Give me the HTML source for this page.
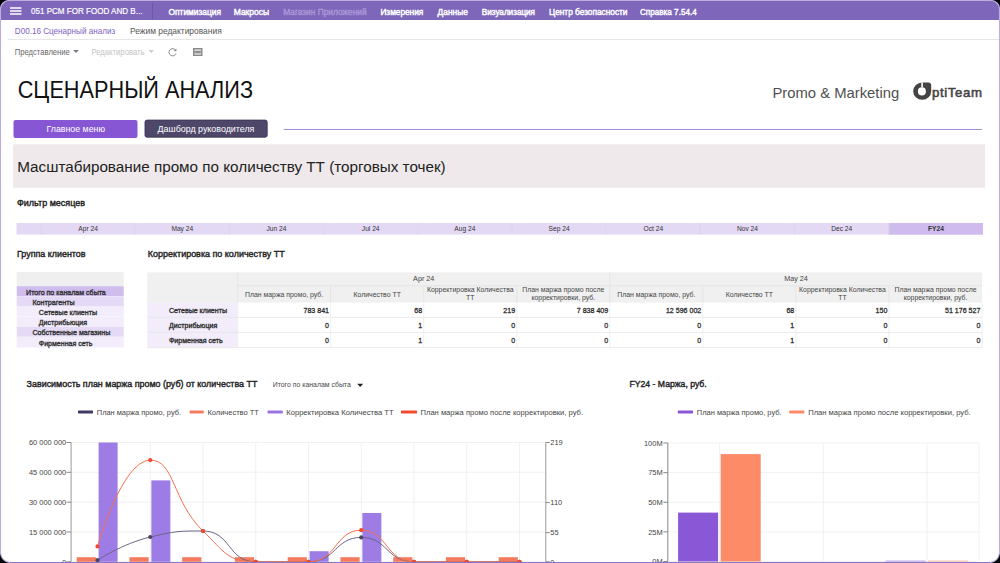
<!DOCTYPE html>
<html><head><meta charset="utf-8"><title>Сценарный анализ</title>
<style>
html,body{margin:0;padding:0;background:#000;width:1000px;height:563px;overflow:hidden}
svg{display:block}
text{font-family:"Liberation Sans", sans-serif;}
</style></head><body>
<svg width="1000" height="563" viewBox="0 0 1000 563">
<rect x="0" y="0" width="1000" height="563" fill="#000" rx="0" />
<clipPath id="fr"><path d="M9 0.5 H991 A8.5 8.5 0 0 1 999.5 9 V552.5 A10 10 0 0 1 989.5 562.5 H10.5 A10 10 0 0 1 0.5 552.5 V9 A8.5 8.5 0 0 1 9 0.5 Z"/></clipPath>
<g clip-path="url(#fr)">
<rect x="0" y="0" width="1000" height="563" fill="#fff" rx="0" />
<rect x="0" y="0" width="1000" height="20" fill="#7e67bb" rx="0" />
<rect x="10" y="7.25" width="11.5" height="1.5" fill="#fff" rx="0" />
<rect x="10" y="10.25" width="11.5" height="1.5" fill="#fff" rx="0" />
<rect x="10" y="13.25" width="11.5" height="1.5" fill="#fff" rx="0" />
<text x="31" y="14.3" font-size="9.2" fill="#fff" text-anchor="start" textLength="111.4" lengthAdjust="spacingAndGlyphs" stroke="#fff" stroke-width="0.2">051 PCM FOR FOOD AND B...</text>
<line x1="152.5" y1="3" x2="152.5" y2="19" stroke="#6c57a8" stroke-width="1" />
<text x="168.6" y="14.6" font-size="9.2" fill="#fff" text-anchor="start" textLength="52.4" lengthAdjust="spacingAndGlyphs" stroke="#fff" stroke-width="0.45">Оптимизация</text>
<text x="233.7" y="14.6" font-size="9.2" fill="#fff" text-anchor="start" textLength="35.5" lengthAdjust="spacingAndGlyphs" stroke="#fff" stroke-width="0.45">Макросы</text>
<text x="283.2" y="14.6" font-size="9.2" fill="#a996d6" text-anchor="start" textLength="83.5" lengthAdjust="spacingAndGlyphs" stroke="#a996d6" stroke-width="0.45">Магазин Приложений</text>
<text x="380.4" y="14.6" font-size="9.2" fill="#fff" text-anchor="start" textLength="42.9" lengthAdjust="spacingAndGlyphs" stroke="#fff" stroke-width="0.45">Измерения</text>
<text x="437.6" y="14.6" font-size="9.2" fill="#fff" text-anchor="start" textLength="30.2" lengthAdjust="spacingAndGlyphs" stroke="#fff" stroke-width="0.45">Данные</text>
<text x="481.8" y="14.6" font-size="9.2" fill="#fff" text-anchor="start" textLength="53.2" lengthAdjust="spacingAndGlyphs" stroke="#fff" stroke-width="0.45">Визуализация</text>
<text x="549" y="14.6" font-size="9.2" fill="#fff" text-anchor="start" textLength="78.5" lengthAdjust="spacingAndGlyphs" stroke="#fff" stroke-width="0.45">Центр безопасности</text>
<text x="640" y="14.6" font-size="9.2" fill="#fff" text-anchor="start" textLength="56.7" lengthAdjust="spacingAndGlyphs" stroke="#fff" stroke-width="0.45">Справка 7.54.4</text>
<text x="14.8" y="34" font-size="9.2" fill="#7f62c3" text-anchor="start" textLength="100.4" lengthAdjust="spacingAndGlyphs" >D00.16 Сценарный анализ</text>
<text x="130" y="34" font-size="9.2" fill="#555" text-anchor="start" textLength="91.7" lengthAdjust="spacingAndGlyphs" >Режим редактирования</text>
<line x1="7.5" y1="39.5" x2="999" y2="39.5" stroke="#e6e6e6" stroke-width="1" />
<text x="14.8" y="54.8" font-size="8.2" fill="#666" text-anchor="start" textLength="55" lengthAdjust="spacingAndGlyphs" >Представление</text>
<path d="M73.2 50 L78.8 50 L76 52.9 Z" fill="#777"/>
<text x="91.4" y="54.8" font-size="8.2" fill="#c4c4c4" text-anchor="start" textLength="53.2" lengthAdjust="spacingAndGlyphs" >Редактировать</text>
<path d="M148.4 50 L154 50 L151.2 52.9 Z" fill="#d0d0d0"/>
<path d="M175.6 50.3 A3.6 3.6 0 1 0 176 53.4" fill="none" stroke="#8a8a8a" stroke-width="1"/>
<path d="M176.4 48.4 L176.4 51.2 L173.6 51.2 Z" fill="#8a8a8a"/>
<rect x="193.5" y="48.5" width="8.5" height="7" fill="#9a9a9a" rx="0" stroke="#888" stroke-width="1"/>
<rect x="194.5" y="49.6" width="6.5" height="1.1" fill="#f4f4f4" rx="0" />
<rect x="194.5" y="53.4" width="6.5" height="1.1" fill="#f4f4f4" rx="0" />
<rect x="195.6" y="51" width="4.4" height="2.1" fill="#8f8f8f" rx="0" />
<text x="17.7" y="98" font-size="23.8" fill="#111" text-anchor="start" textLength="235.3" lengthAdjust="spacingAndGlyphs" >СЦЕНАРНЫЙ АНАЛИЗ</text>
<text x="772.5" y="97.6" font-size="15.0" fill="#505050" text-anchor="start" textLength="126.7" lengthAdjust="spacingAndGlyphs" >Promo &amp; Marketing</text>
<path d="M922.2 82.6 L928.3 82.6 Q931.2 82.6 931.2 85.5 L931.2 91.2 A9 8.6 0 1 1 922.2 82.6 Z M921.9 87.3 A4 4.1 0 1 0 925.9 91.4 A4 4.1 0 0 0 921.9 87.3 Z" fill="#444" fill-rule="evenodd"/>
<rect x="921.3" y="82.4" width="1.6" height="5" fill="#fff" rx="0" />
<text x="932" y="97" font-size="13.2" fill="#444" stroke="#444" stroke-width="0.55" textLength="50" lengthAdjust="spacing">ptiTeam</text>
<rect x="13.5" y="120" width="124" height="18" fill="#8756d5" rx="2" />
<text x="46.5" y="132.3" font-size="9.4" fill="#fff" text-anchor="start" textLength="58.5" lengthAdjust="spacingAndGlyphs" >Главное меню</text>
<rect x="145" y="120.1" width="122.2" height="17.1" fill="#4e4769" rx="2" stroke="#3f3859" stroke-width="0.9"/>
<text x="157.6" y="132.1" font-size="9.4" fill="#fff" text-anchor="start" textLength="96.8" lengthAdjust="spacingAndGlyphs" >Дашборд руководителя</text>
<line x1="283.6" y1="129.5" x2="982" y2="129.5" stroke="#a88ce0" stroke-width="1.2" />
<rect x="13" y="144.3" width="972" height="43.5" fill="#efe9eb" rx="0" />
<text x="17.2" y="172.4" font-size="15.2" fill="#222" text-anchor="start" textLength="428.5" lengthAdjust="spacingAndGlyphs" >Масштабирование промо по количеству ТТ (торговых точек)</text>
<text x="17" y="206.1" font-size="9.8" fill="#222" text-anchor="start" textLength="68" lengthAdjust="spacingAndGlyphs" stroke="#222" stroke-width="0.42">Фильтр месяцев</text>
<rect x="16.5" y="223" width="966.5" height="11.6" fill="#e3d9f5" rx="0" />
<line x1="41.0" y1="223" x2="41.0" y2="234.6" stroke="#ddd5ea" stroke-width="0.9" />
<text x="88.1" y="231.1" font-size="7.0" fill="#333" text-anchor="middle" textLength="19.59" lengthAdjust="spacingAndGlyphs" >Apr 24</text>
<line x1="135.2" y1="223" x2="135.2" y2="234.6" stroke="#ddd5ea" stroke-width="0.9" />
<text x="182.29999999999998" y="231.1" font-size="7.0" fill="#333" text-anchor="middle" textLength="21.81" lengthAdjust="spacingAndGlyphs" >May 24</text>
<line x1="229.4" y1="223" x2="229.4" y2="234.6" stroke="#ddd5ea" stroke-width="0.9" />
<text x="276.5" y="231.1" font-size="7.0" fill="#333" text-anchor="middle" textLength="19.97" lengthAdjust="spacingAndGlyphs" >Jun 24</text>
<line x1="323.6" y1="223" x2="323.6" y2="234.6" stroke="#ddd5ea" stroke-width="0.9" />
<text x="370.70000000000005" y="231.1" font-size="7.0" fill="#333" text-anchor="middle" textLength="17.75" lengthAdjust="spacingAndGlyphs" >Jul 24</text>
<line x1="417.8" y1="223" x2="417.8" y2="234.6" stroke="#ddd5ea" stroke-width="0.9" />
<text x="464.90000000000003" y="231.1" font-size="7.0" fill="#333" text-anchor="middle" textLength="21.08" lengthAdjust="spacingAndGlyphs" >Aug 24</text>
<line x1="512.0" y1="223" x2="512.0" y2="234.6" stroke="#ddd5ea" stroke-width="0.9" />
<text x="559.1" y="231.1" font-size="7.0" fill="#333" text-anchor="middle" textLength="21.08" lengthAdjust="spacingAndGlyphs" >Sep 24</text>
<line x1="606.2" y1="223" x2="606.2" y2="234.6" stroke="#ddd5ea" stroke-width="0.9" />
<text x="653.3000000000001" y="231.1" font-size="7.0" fill="#333" text-anchor="middle" textLength="19.59" lengthAdjust="spacingAndGlyphs" >Oct 24</text>
<line x1="700.4" y1="223" x2="700.4" y2="234.6" stroke="#ddd5ea" stroke-width="0.9" />
<text x="747.5" y="231.1" font-size="7.0" fill="#333" text-anchor="middle" textLength="21.07" lengthAdjust="spacingAndGlyphs" >Nov 24</text>
<line x1="794.6" y1="223" x2="794.6" y2="234.6" stroke="#ddd5ea" stroke-width="0.9" />
<text x="841.7" y="231.1" font-size="7.0" fill="#333" text-anchor="middle" textLength="21.07" lengthAdjust="spacingAndGlyphs" >Dec 24</text>
<rect x="888.8000000000001" y="223" width="94.2" height="11.6" fill="#cfbbee" rx="0" />
<line x1="888.8000000000001" y1="223" x2="888.8000000000001" y2="234.6" stroke="#ddd5ea" stroke-width="0.9" />
<text x="935.9000000000001" y="231.1" font-size="7.0" fill="#333" font-weight="bold" text-anchor="middle" textLength="15.89" lengthAdjust="spacingAndGlyphs" >FY24</text>
<text x="17" y="256.5" font-size="9.8" fill="#222" text-anchor="start" textLength="68.5" lengthAdjust="spacingAndGlyphs" stroke="#222" stroke-width="0.42">Группа клиентов</text>
<rect x="16.7" y="272" width="107" height="14.2" fill="#efefef" rx="0" />
<rect x="16.7" y="286.2" width="107" height="10.5" fill="#cfbdee" rx="0" />
<line x1="16.7" y1="296.7" x2="123.7" y2="296.7" stroke="#fff" stroke-width="0.6" />
<text x="26.1" y="294.55" font-size="7.8" fill="#333" text-anchor="start" textLength="79.7" lengthAdjust="spacingAndGlyphs" stroke="#333" stroke-width="0.38">Итого по каналам сбыта</text>
<rect x="16.7" y="296.7" width="107" height="10.100000000000023" fill="#e4daf6" rx="0" />
<line x1="16.7" y1="306.8" x2="123.7" y2="306.8" stroke="#fff" stroke-width="0.6" />
<text x="32.4" y="304.85" font-size="7.8" fill="#333" text-anchor="start" textLength="42.2" lengthAdjust="spacingAndGlyphs" stroke="#333" stroke-width="0.38">Контрагенты</text>
<rect x="16.7" y="306.8" width="107" height="9.699999999999989" fill="#f2ecfb" rx="0" />
<line x1="16.7" y1="316.5" x2="123.7" y2="316.5" stroke="#fff" stroke-width="0.6" />
<text x="38.8" y="314.75" font-size="7.8" fill="#333" text-anchor="start" textLength="58.3" lengthAdjust="spacingAndGlyphs" stroke="#333" stroke-width="0.38">Сетевые клиенты</text>
<rect x="16.7" y="316.5" width="107" height="10.199999999999989" fill="#f2ecfb" rx="0" />
<line x1="16.7" y1="326.7" x2="123.7" y2="326.7" stroke="#fff" stroke-width="0.6" />
<text x="38.8" y="324.70000000000005" font-size="7.8" fill="#333" text-anchor="start" textLength="48.2" lengthAdjust="spacingAndGlyphs" stroke="#333" stroke-width="0.38">Дистрибьюция</text>
<rect x="16.7" y="326.7" width="107" height="10.300000000000011" fill="#e4daf6" rx="0" />
<line x1="16.7" y1="337" x2="123.7" y2="337" stroke="#fff" stroke-width="0.6" />
<text x="32.4" y="334.95000000000005" font-size="7.8" fill="#333" text-anchor="start" textLength="78.0" lengthAdjust="spacingAndGlyphs" stroke="#333" stroke-width="0.38">Собственные магазины</text>
<rect x="16.7" y="337" width="107" height="10.800000000000011" fill="#f2ecfb" rx="0" />
<line x1="16.7" y1="347.8" x2="123.7" y2="347.8" stroke="#fff" stroke-width="0.6" />
<text x="38.8" y="345.5" font-size="7.8" fill="#333" text-anchor="start" textLength="53.5" lengthAdjust="spacingAndGlyphs" stroke="#333" stroke-width="0.38">Фирменная сеть</text>
<text x="147.8" y="256.5" font-size="9.8" fill="#222" text-anchor="start" textLength="136.9" lengthAdjust="spacingAndGlyphs" stroke="#222" stroke-width="0.42">Корректировка по количеству ТТ</text>
<rect x="147.3" y="272.4" width="834.7" height="30.2" fill="#f0f0f0" rx="0" />
<rect x="147.3" y="302.6" width="90.29999999999998" height="45" fill="#f2ecfb" rx="0" />
<line x1="237.6" y1="285.8" x2="982" y2="285.8" stroke="#e2e2e2" stroke-width="0.8" />
<line x1="237.6" y1="272.4" x2="237.6" y2="302.6" stroke="#e2e2e2" stroke-width="0.8" />
<line x1="609.8" y1="272.4" x2="609.8" y2="302.6" stroke="#e2e2e2" stroke-width="0.8" />
<line x1="330.65" y1="285.8" x2="330.65" y2="302.6" stroke="#e2e2e2" stroke-width="0.8" />
<line x1="423.7" y1="285.8" x2="423.7" y2="302.6" stroke="#e2e2e2" stroke-width="0.8" />
<line x1="516.75" y1="285.8" x2="516.75" y2="302.6" stroke="#e2e2e2" stroke-width="0.8" />
<line x1="702.85" y1="285.8" x2="702.85" y2="302.6" stroke="#e2e2e2" stroke-width="0.8" />
<line x1="795.9" y1="285.8" x2="795.9" y2="302.6" stroke="#e2e2e2" stroke-width="0.8" />
<line x1="888.95" y1="285.8" x2="888.95" y2="302.6" stroke="#e2e2e2" stroke-width="0.8" />
<line x1="330.65" y1="302.6" x2="330.65" y2="347.8" stroke="#ececec" stroke-width="0.8" />
<line x1="423.7" y1="302.6" x2="423.7" y2="347.8" stroke="#ececec" stroke-width="0.8" />
<line x1="516.75" y1="302.6" x2="516.75" y2="347.8" stroke="#ececec" stroke-width="0.8" />
<line x1="609.8" y1="302.6" x2="609.8" y2="347.8" stroke="#ececec" stroke-width="0.8" />
<line x1="702.85" y1="302.6" x2="702.85" y2="347.8" stroke="#ececec" stroke-width="0.8" />
<line x1="795.9" y1="302.6" x2="795.9" y2="347.8" stroke="#ececec" stroke-width="0.8" />
<line x1="888.95" y1="302.6" x2="888.95" y2="347.8" stroke="#ececec" stroke-width="0.8" />
<line x1="982.0" y1="302.6" x2="982.0" y2="347.8" stroke="#ececec" stroke-width="0.8" />
<line x1="237.6" y1="302.6" x2="237.6" y2="347.8" stroke="#ececec" stroke-width="0.8" />
<line x1="147.3" y1="317.4" x2="982" y2="317.4" stroke="#e6e6e6" stroke-width="0.8" />
<line x1="147.3" y1="332.4" x2="982" y2="332.4" stroke="#e6e6e6" stroke-width="0.8" />
<line x1="147.3" y1="347.6" x2="982" y2="347.6" stroke="#e6e6e6" stroke-width="0.8" />
<text x="423.7" y="281.2" font-size="7.2" fill="#444" text-anchor="middle" >Apr 24</text>
<text x="796" y="281.2" font-size="7.2" fill="#444" text-anchor="middle" >May 24</text>
<text x="284.125" y="296.5" font-size="6.9" fill="#444" text-anchor="middle" >План маржа промо, руб.</text>
<text x="377.17499999999995" y="296.5" font-size="6.9" fill="#444" text-anchor="middle" >Количество ТТ</text>
<text x="470.225" y="292.4" font-size="6.9" fill="#444" text-anchor="middle" >Корректировка Количества</text>
<text x="470.225" y="300.2" font-size="6.9" fill="#444" text-anchor="middle" >ТТ</text>
<text x="563.275" y="292.4" font-size="6.9" fill="#444" text-anchor="middle" >План маржа промо после</text>
<text x="563.275" y="300.2" font-size="6.9" fill="#444" text-anchor="middle" >корректировки, руб.</text>
<text x="656.325" y="296.5" font-size="6.9" fill="#444" text-anchor="middle" >План маржа промо, руб.</text>
<text x="749.375" y="296.5" font-size="6.9" fill="#444" text-anchor="middle" >Количество ТТ</text>
<text x="842.425" y="292.4" font-size="6.9" fill="#444" text-anchor="middle" >Корректировка Количества</text>
<text x="842.425" y="300.2" font-size="6.9" fill="#444" text-anchor="middle" >ТТ</text>
<text x="935.475" y="292.4" font-size="6.9" fill="#444" text-anchor="middle" >План маржа промо после</text>
<text x="935.475" y="300.2" font-size="6.9" fill="#444" text-anchor="middle" >корректировки, руб.</text>
<text x="169" y="313" font-size="7.6" fill="#333" text-anchor="start" textLength="58.01" lengthAdjust="spacingAndGlyphs" stroke="#333" stroke-width="0.38">Сетевые клиенты</text>
<text x="169" y="328" font-size="7.6" fill="#333" text-anchor="start" textLength="48.24" lengthAdjust="spacingAndGlyphs" stroke="#333" stroke-width="0.38">Дистрибьюция</text>
<text x="169" y="343" font-size="7.6" fill="#333" text-anchor="start" textLength="53.72" lengthAdjust="spacingAndGlyphs" stroke="#333" stroke-width="0.38">Фирменная сеть</text>
<text x="329.04999999999995" y="313" font-size="7.6" fill="#2a2a2a" text-anchor="end" textLength="25.55" lengthAdjust="spacingAndGlyphs" stroke="#2a2a2a" stroke-width="0.28">783 841</text>
<text x="422.09999999999997" y="313" font-size="7.6" fill="#2a2a2a" text-anchor="end" textLength="7.86" lengthAdjust="spacingAndGlyphs" stroke="#2a2a2a" stroke-width="0.28">68</text>
<text x="515.15" y="313" font-size="7.6" fill="#2a2a2a" text-anchor="end" textLength="11.79" lengthAdjust="spacingAndGlyphs" stroke="#2a2a2a" stroke-width="0.28">219</text>
<text x="608.1999999999999" y="313" font-size="7.6" fill="#2a2a2a" text-anchor="end" textLength="31.44" lengthAdjust="spacingAndGlyphs" stroke="#2a2a2a" stroke-width="0.28">7 838 409</text>
<text x="701.25" y="313" font-size="7.6" fill="#2a2a2a" text-anchor="end" textLength="35.37" lengthAdjust="spacingAndGlyphs" stroke="#2a2a2a" stroke-width="0.28">12 596 002</text>
<text x="794.3" y="313" font-size="7.6" fill="#2a2a2a" text-anchor="end" textLength="7.86" lengthAdjust="spacingAndGlyphs" stroke="#2a2a2a" stroke-width="0.28">68</text>
<text x="887.35" y="313" font-size="7.6" fill="#2a2a2a" text-anchor="end" textLength="11.79" lengthAdjust="spacingAndGlyphs" stroke="#2a2a2a" stroke-width="0.28">150</text>
<text x="980.4" y="313" font-size="7.6" fill="#2a2a2a" text-anchor="end" textLength="35.37" lengthAdjust="spacingAndGlyphs" stroke="#2a2a2a" stroke-width="0.28">51 176 527</text>
<text x="329.04999999999995" y="328" font-size="7.6" fill="#2a2a2a" text-anchor="end" textLength="3.93" lengthAdjust="spacingAndGlyphs" stroke="#2a2a2a" stroke-width="0.28">0</text>
<text x="422.09999999999997" y="328" font-size="7.6" fill="#2a2a2a" text-anchor="end" textLength="3.93" lengthAdjust="spacingAndGlyphs" stroke="#2a2a2a" stroke-width="0.28">1</text>
<text x="515.15" y="328" font-size="7.6" fill="#2a2a2a" text-anchor="end" textLength="3.93" lengthAdjust="spacingAndGlyphs" stroke="#2a2a2a" stroke-width="0.28">0</text>
<text x="608.1999999999999" y="328" font-size="7.6" fill="#2a2a2a" text-anchor="end" textLength="3.93" lengthAdjust="spacingAndGlyphs" stroke="#2a2a2a" stroke-width="0.28">0</text>
<text x="701.25" y="328" font-size="7.6" fill="#2a2a2a" text-anchor="end" textLength="3.93" lengthAdjust="spacingAndGlyphs" stroke="#2a2a2a" stroke-width="0.28">0</text>
<text x="794.3" y="328" font-size="7.6" fill="#2a2a2a" text-anchor="end" textLength="3.93" lengthAdjust="spacingAndGlyphs" stroke="#2a2a2a" stroke-width="0.28">1</text>
<text x="887.35" y="328" font-size="7.6" fill="#2a2a2a" text-anchor="end" textLength="3.93" lengthAdjust="spacingAndGlyphs" stroke="#2a2a2a" stroke-width="0.28">0</text>
<text x="980.4" y="328" font-size="7.6" fill="#2a2a2a" text-anchor="end" textLength="3.93" lengthAdjust="spacingAndGlyphs" stroke="#2a2a2a" stroke-width="0.28">0</text>
<text x="329.04999999999995" y="343" font-size="7.6" fill="#2a2a2a" text-anchor="end" textLength="3.93" lengthAdjust="spacingAndGlyphs" stroke="#2a2a2a" stroke-width="0.28">0</text>
<text x="422.09999999999997" y="343" font-size="7.6" fill="#2a2a2a" text-anchor="end" textLength="3.93" lengthAdjust="spacingAndGlyphs" stroke="#2a2a2a" stroke-width="0.28">1</text>
<text x="515.15" y="343" font-size="7.6" fill="#2a2a2a" text-anchor="end" textLength="3.93" lengthAdjust="spacingAndGlyphs" stroke="#2a2a2a" stroke-width="0.28">0</text>
<text x="608.1999999999999" y="343" font-size="7.6" fill="#2a2a2a" text-anchor="end" textLength="3.93" lengthAdjust="spacingAndGlyphs" stroke="#2a2a2a" stroke-width="0.28">0</text>
<text x="701.25" y="343" font-size="7.6" fill="#2a2a2a" text-anchor="end" textLength="3.93" lengthAdjust="spacingAndGlyphs" stroke="#2a2a2a" stroke-width="0.28">0</text>
<text x="794.3" y="343" font-size="7.6" fill="#2a2a2a" text-anchor="end" textLength="3.93" lengthAdjust="spacingAndGlyphs" stroke="#2a2a2a" stroke-width="0.28">1</text>
<text x="887.35" y="343" font-size="7.6" fill="#2a2a2a" text-anchor="end" textLength="3.93" lengthAdjust="spacingAndGlyphs" stroke="#2a2a2a" stroke-width="0.28">0</text>
<text x="980.4" y="343" font-size="7.6" fill="#2a2a2a" text-anchor="end" textLength="3.93" lengthAdjust="spacingAndGlyphs" stroke="#2a2a2a" stroke-width="0.28">0</text>
<text x="26.6" y="387.3" font-size="9.8" fill="#222" text-anchor="start" textLength="230.8" lengthAdjust="spacingAndGlyphs" stroke="#222" stroke-width="0.42">Зависимость план маржа промо (руб) от количества ТТ</text>
<text x="272.7" y="387.3" font-size="7.3" fill="#484848" text-anchor="start" textLength="78.1" lengthAdjust="spacingAndGlyphs" >Итого по каналам сбыта</text>
<path d="M357.2 383.7 L363.2 383.7 L360.2 386.9 Z" fill="#222"/>
<rect x="78" y="410.5" width="15" height="3" fill="#3f3a63" rx="0.4" />
<text x="96.8" y="414.5" font-size="7.8" fill="#444" text-anchor="start" textLength="84.2" lengthAdjust="spacingAndGlyphs" >План маржа промо, руб.</text>
<rect x="189.6" y="410.5" width="14.099999999999994" height="3" fill="#f47b5e" rx="0.4" />
<text x="207.4" y="414.5" font-size="7.8" fill="#444" text-anchor="start" textLength="51.5" lengthAdjust="spacingAndGlyphs" >Количество ТТ</text>
<rect x="267.5" y="410.5" width="15.300000000000011" height="3" fill="#9b72e3" rx="0.4" />
<text x="286.2" y="414.5" font-size="7.8" fill="#444" text-anchor="start" textLength="107.5" lengthAdjust="spacingAndGlyphs" >Корректировка Количества ТТ</text>
<rect x="401" y="410.5" width="16" height="3" fill="#f34a2b" rx="0.4" />
<text x="420.5" y="414.5" font-size="7.8" fill="#444" text-anchor="start" textLength="162.5" lengthAdjust="spacingAndGlyphs" >План маржа промо после корректировки, руб.</text>
<line x1="71.1" y1="442.5" x2="545.8" y2="442.5" stroke="#ededed" stroke-width="0.8" />
<line x1="71.1" y1="472.325" x2="545.8" y2="472.325" stroke="#ededed" stroke-width="0.8" />
<line x1="71.1" y1="502.15" x2="545.8" y2="502.15" stroke="#ededed" stroke-width="0.8" />
<line x1="71.1" y1="531.9749999999999" x2="545.8" y2="531.9749999999999" stroke="#ededed" stroke-width="0.8" />
<line x1="71.1" y1="561.8" x2="545.8" y2="561.8" stroke="#ededed" stroke-width="0.8" />
<line x1="150.25" y1="442.5" x2="150.25" y2="561.8" stroke="#ededed" stroke-width="0.8" />
<line x1="203.0" y1="442.5" x2="203.0" y2="561.8" stroke="#ededed" stroke-width="0.8" />
<line x1="255.75" y1="442.5" x2="255.75" y2="561.8" stroke="#ededed" stroke-width="0.8" />
<line x1="308.5" y1="442.5" x2="308.5" y2="561.8" stroke="#ededed" stroke-width="0.8" />
<line x1="361.25" y1="442.5" x2="361.25" y2="561.8" stroke="#ededed" stroke-width="0.8" />
<line x1="414.0" y1="442.5" x2="414.0" y2="561.8" stroke="#ededed" stroke-width="0.8" />
<line x1="466.75" y1="442.5" x2="466.75" y2="561.8" stroke="#ededed" stroke-width="0.8" />
<line x1="519.5" y1="442.5" x2="519.5" y2="561.8" stroke="#ededed" stroke-width="0.8" />
<line x1="71.1" y1="442.5" x2="71.1" y2="561.8" stroke="#999" stroke-width="1" />
<line x1="545.8" y1="442.5" x2="545.8" y2="561.8" stroke="#999" stroke-width="1" />
<line x1="66.6" y1="442.5" x2="71.1" y2="442.5" stroke="#888" stroke-width="1" />
<text x="66.2" y="445.2" font-size="8" fill="#444" text-anchor="end" textLength="37.24" lengthAdjust="spacingAndGlyphs" >60 000 000</text>
<line x1="66.6" y1="472.325" x2="71.1" y2="472.325" stroke="#888" stroke-width="1" />
<text x="66.2" y="475.025" font-size="8" fill="#444" text-anchor="end" textLength="37.24" lengthAdjust="spacingAndGlyphs" >45 000 000</text>
<line x1="66.6" y1="502.15" x2="71.1" y2="502.15" stroke="#888" stroke-width="1" />
<text x="66.2" y="504.84999999999997" font-size="8" fill="#444" text-anchor="end" textLength="37.24" lengthAdjust="spacingAndGlyphs" >30 000 000</text>
<line x1="66.6" y1="531.9749999999999" x2="71.1" y2="531.9749999999999" stroke="#888" stroke-width="1" />
<text x="66.2" y="534.675" font-size="8" fill="#444" text-anchor="end" textLength="37.24" lengthAdjust="spacingAndGlyphs" >15 000 000</text>
<line x1="66.6" y1="561.8" x2="71.1" y2="561.8" stroke="#888" stroke-width="1" />
<text x="66.2" y="564.5" font-size="8" fill="#444" text-anchor="end" textLength="4.14" lengthAdjust="spacingAndGlyphs" >0</text>
<line x1="545.8" y1="442.5" x2="549.8" y2="442.5" stroke="#888" stroke-width="1" />
<text x="550.3" y="445.2" font-size="8" fill="#444" text-anchor="start" textLength="12.41" lengthAdjust="spacingAndGlyphs" >219</text>
<line x1="545.8" y1="502.6" x2="549.8" y2="502.6" stroke="#888" stroke-width="1" />
<text x="550.3" y="505.3" font-size="8" fill="#444" text-anchor="start" textLength="11.86" lengthAdjust="spacingAndGlyphs" >110</text>
<line x1="545.8" y1="532.6" x2="549.8" y2="532.6" stroke="#888" stroke-width="1" />
<text x="550.3" y="535.3000000000001" font-size="8" fill="#444" text-anchor="start" textLength="8.28" lengthAdjust="spacingAndGlyphs" >55</text>
<line x1="545.8" y1="561.8" x2="549.8" y2="561.8" stroke="#888" stroke-width="1" />
<text x="550.3" y="564.5" font-size="8" fill="#444" text-anchor="start" textLength="4.14" lengthAdjust="spacingAndGlyphs" >0</text>
<rect x="76.7" y="557.2" width="19.2" height="4.599999999999909" fill="#f47b5e" rx="0" />
<rect x="129.45" y="557.2" width="19.2" height="4.599999999999909" fill="#f47b5e" rx="0" />
<rect x="182.2" y="557.2" width="19.2" height="4.599999999999909" fill="#f47b5e" rx="0" />
<rect x="234.95" y="557.2" width="19.2" height="4.599999999999909" fill="#f47b5e" rx="0" />
<rect x="287.7" y="557.2" width="19.2" height="4.599999999999909" fill="#f47b5e" rx="0" />
<rect x="340.45" y="557.2" width="19.2" height="4.599999999999909" fill="#f47b5e" rx="0" />
<rect x="393.2" y="557.2" width="19.2" height="4.599999999999909" fill="#f47b5e" rx="0" />
<rect x="445.95" y="557.2" width="19.2" height="4.599999999999909" fill="#f47b5e" rx="0" />
<rect x="498.7" y="557.2" width="19.2" height="4.599999999999909" fill="#f47b5e" rx="0" />
<rect x="98.6" y="442.5" width="19" height="119.29999999999995" fill="#9d7ce6" rx="0" />
<rect x="151.35" y="480.4" width="19" height="81.39999999999998" fill="#9d7ce6" rx="0" />
<rect x="309.6" y="551.2" width="19" height="10.599999999999909" fill="#9d7ce6" rx="0" />
<rect x="362.35" y="513" width="19" height="48.799999999999955" fill="#9d7ce6" rx="0" />
<path d="M97.50 560.20 C97.50 560.20 122.79 543.51 150.25 537.00 C175.54 531.00 178.47 531.00 203.00 531.00 C231.22 531.00 227.44 561.80 255.75 561.80 C280.19 561.80 283.40 561.80 308.50 561.80 C336.15 561.80 334.88 537.40 361.25 537.40 C387.62 537.40 386.35 561.80 414.00 561.80 C439.10 561.80 440.38 561.80 466.75 561.80 C493.12 561.80 519.50 561.80 519.50 561.80" fill="none" stroke="#6b6585" stroke-width="1"/>
<path d="M97.50 546.40 C97.50 546.40 122.10 460.10 150.25 460.10 C174.85 460.10 171.81 500.93 203.00 531.00 C224.56 551.78 227.44 561.80 255.75 561.80 C280.19 561.80 284.14 561.80 308.50 561.80 C336.89 561.80 334.88 530.20 361.25 530.20 C387.62 530.20 385.61 561.80 414.00 561.80 C438.36 561.80 440.38 561.80 466.75 561.80 C493.12 561.80 519.50 561.80 519.50 561.80" fill="none" stroke="#f6704f" stroke-width="1"/>
<circle cx="97.5" cy="560.2" r="2.1" fill="#4a4560"/>
<circle cx="150.25" cy="537" r="2.1" fill="#4a4560"/>
<circle cx="203.0" cy="531" r="2.1" fill="#4a4560"/>
<circle cx="255.75" cy="561.8" r="2.1" fill="#4a4560"/>
<circle cx="308.5" cy="561.8" r="2.1" fill="#4a4560"/>
<circle cx="361.25" cy="537.4" r="2.1" fill="#4a4560"/>
<circle cx="414.0" cy="561.8" r="2.1" fill="#4a4560"/>
<circle cx="466.75" cy="561.8" r="2.1" fill="#4a4560"/>
<circle cx="519.5" cy="561.8" r="2.1" fill="#4a4560"/>
<circle cx="97.5" cy="546.4" r="2.1" fill="#f34a2b"/>
<circle cx="150.25" cy="460.1" r="2.1" fill="#f34a2b"/>
<circle cx="203.0" cy="531" r="2.1" fill="#f34a2b"/>
<circle cx="255.75" cy="561.8" r="2.1" fill="#f34a2b"/>
<circle cx="308.5" cy="561.8" r="2.1" fill="#f34a2b"/>
<circle cx="361.25" cy="530.2" r="2.1" fill="#f34a2b"/>
<circle cx="414.0" cy="561.8" r="2.1" fill="#f34a2b"/>
<circle cx="466.75" cy="561.8" r="2.1" fill="#f34a2b"/>
<circle cx="519.5" cy="561.8" r="2.1" fill="#f34a2b"/>
<text x="629.5" y="387.3" font-size="9.8" fill="#222" text-anchor="start" textLength="77.2" lengthAdjust="spacingAndGlyphs" stroke="#222" stroke-width="0.42">FY24 - Маржа, руб.</text>
<rect x="677.8" y="410.5" width="15.200000000000045" height="3" fill="#8a57d6" rx="0.4" />
<text x="696.8" y="414.5" font-size="7.8" fill="#444" text-anchor="start" textLength="84.8" lengthAdjust="spacingAndGlyphs" >План маржа промо, руб.</text>
<rect x="789.2" y="410.5" width="15.199999999999932" height="3" fill="#fe8b68" rx="0.4" />
<text x="808.2" y="414.5" font-size="7.8" fill="#444" text-anchor="start" textLength="162.4" lengthAdjust="spacingAndGlyphs" >План маржа промо после корректировки, руб.</text>
<line x1="667.8" y1="443.0" x2="978.9" y2="443.0" stroke="#ededed" stroke-width="0.8" />
<line x1="667.8" y1="472.625" x2="978.9" y2="472.625" stroke="#ededed" stroke-width="0.8" />
<line x1="667.8" y1="502.25" x2="978.9" y2="502.25" stroke="#ededed" stroke-width="0.8" />
<line x1="667.8" y1="531.875" x2="978.9" y2="531.875" stroke="#ededed" stroke-width="0.8" />
<line x1="667.8" y1="561.5" x2="978.9" y2="561.5" stroke="#ededed" stroke-width="0.8" />
<line x1="719.6" y1="443" x2="719.6" y2="561.5" stroke="#ededed" stroke-width="0.8" />
<line x1="823.3" y1="443" x2="823.3" y2="561.5" stroke="#ededed" stroke-width="0.8" />
<line x1="927" y1="443" x2="927" y2="561.5" stroke="#ededed" stroke-width="0.8" />
<line x1="978.9" y1="443" x2="978.9" y2="561.5" stroke="#ededed" stroke-width="0.8" />
<line x1="667.8" y1="443" x2="667.8" y2="561.5" stroke="#888" stroke-width="1" />
<line x1="663.3" y1="443.0" x2="667.8" y2="443.0" stroke="#888" stroke-width="1" />
<text x="662.6" y="445.7" font-size="8" fill="#444" text-anchor="end" textLength="18.61" lengthAdjust="spacingAndGlyphs" >100M</text>
<line x1="663.3" y1="472.625" x2="667.8" y2="472.625" stroke="#888" stroke-width="1" />
<text x="662.6" y="475.325" font-size="8" fill="#444" text-anchor="end" textLength="14.47" lengthAdjust="spacingAndGlyphs" >75M</text>
<line x1="663.3" y1="502.25" x2="667.8" y2="502.25" stroke="#888" stroke-width="1" />
<text x="662.6" y="504.95" font-size="8" fill="#444" text-anchor="end" textLength="14.47" lengthAdjust="spacingAndGlyphs" >50M</text>
<line x1="663.3" y1="531.875" x2="667.8" y2="531.875" stroke="#888" stroke-width="1" />
<text x="662.6" y="534.575" font-size="8" fill="#444" text-anchor="end" textLength="14.47" lengthAdjust="spacingAndGlyphs" >25M</text>
<line x1="663.3" y1="561.5" x2="667.8" y2="561.5" stroke="#888" stroke-width="1" />
<text x="662.6" y="564.2" font-size="8" fill="#444" text-anchor="end" textLength="10.34" lengthAdjust="spacingAndGlyphs" >0M</text>
<rect x="678.1" y="512.6" width="40" height="48.89999999999998" fill="#8a57d6" rx="0" />
<rect x="720.7" y="454.1" width="40" height="107.39999999999998" fill="#fe8b68" rx="0" />
<rect x="885.6" y="560.6" width="40" height="1" fill="#b49ce6" rx="0" />
<rect x="928" y="560.6" width="40" height="1" fill="#fdb8a0" rx="0" />
</g>
<path d="M9 0.5 H991 A8.5 8.5 0 0 1 999.5 9 V552.5 A10 10 0 0 1 989.5 562.5 H10.5 A10 10 0 0 1 0.5 552.5 V9 A8.5 8.5 0 0 1 9 0.5 Z" fill="none" stroke="#bbaedd" stroke-width="1.1"/>
<line x1="10" y1="562.5" x2="990" y2="562.5" stroke="#8a76c6" stroke-width="1.2" />
</svg>
</body></html>
